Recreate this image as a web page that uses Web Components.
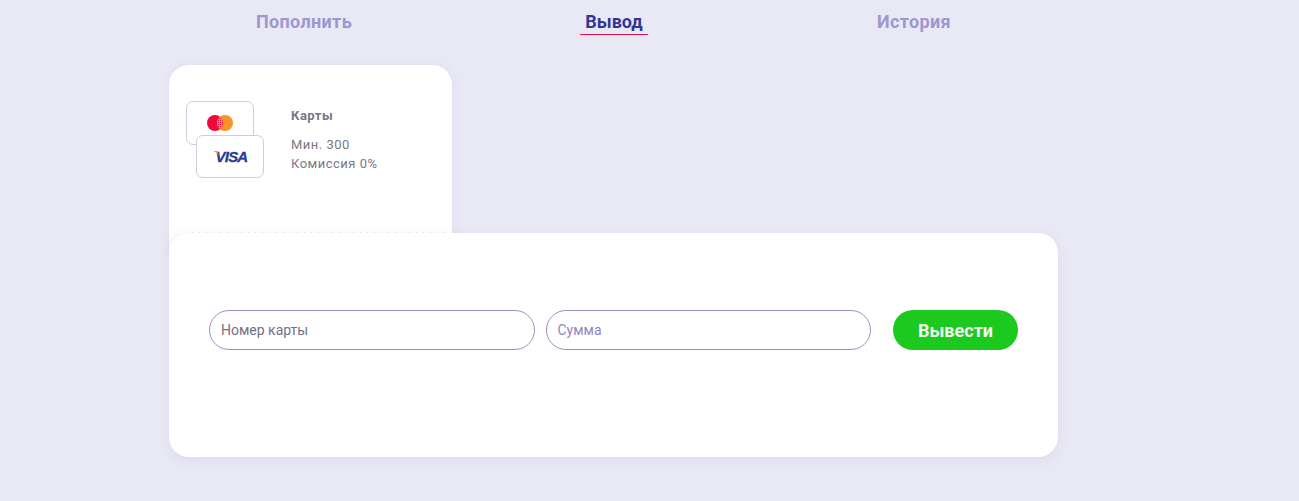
<!DOCTYPE html>
<html lang="ru">
<head>
<meta charset="UTF-8">
<title>Вывод</title>
<style>
    html, body { margin: 0; background: #e9e9f5; }
    body { font-family: Roboto, "Liberation Sans", sans-serif; height: 501px; overflow: hidden; }
</style>
</head>
<body>
<cash-page>
    <tab-bar>
        <tab-item>Пополнить</tab-item>
        <tab-item active style="--w:68px">Вывод</tab-item>
        <tab-item style="--w:90px">История</tab-item>
    </tab-bar>
    <method-card>
        <span slot="title">Карты</span>
        <span slot="min">Мин. 300</span>
        <span slot="fee">Комиссия 0%</span>
    </method-card>
    <withdraw-panel>
        <text-field placeholder="Номер карты" tone="#75707f"></text-field>
        <text-field placeholder="Сумма" tone="#8d87bd"></text-field>
        <green-button>Вывести</green-button>
    </withdraw-panel>
</cash-page>

<script>
    // small helper, every element just gets a shadow root with this html
    function shadowEl(name, html, setup) {
        customElements.define(name, class extends HTMLElement {
            constructor() {
                super();
                this.attachShadow({ mode: 'open' }).innerHTML = html;
            }
            connectedCallback() {
                if (setup) setup(this);
            }
        });
    }

    shadowEl('cash-page', `
        <style>
            :host { display: block; width: 889px; margin-left: 169px; }
        </style>
        <slot></slot>
    `);

    shadowEl('tab-bar', `
        <style>
            :host { display: flex; gap: 221px; height: 65px; padding-left: 80px; box-sizing: border-box; }
        </style>
        <slot></slot>
    `);

    shadowEl('tab-item', `
        <style>
            :host {
                display: block;
                width: var(--w, 110px);
                height: 35px;
                box-sizing: border-box;
                padding-top: 11px;
                text-align: center;
                font-size: 18px;
                letter-spacing: .35px;
                line-height: 21px;
                font-weight: 700;
                color: #9c97cf;
            }
            :host([active]) { color: #333595; letter-spacing: 0; }
            .line { display: none; height: 1px; margin-top: 2px; background: #ea1150; }
            :host([active]) .line { display: block; }
        </style>
        <slot></slot>
        <div class="line"></div>
    `);

    shadowEl('method-card', `
        <style>
            :host {
                display: flex;
                width: 283px;
                height: 188px;
                box-sizing: border-box;
                padding: 36px 0 0 17px;
                background: #fff;
                border-radius: 20px 20px 0 0;
                box-shadow: 0 0 10px rgba(120, 120, 190, .1);
                color: #7b7686;
                font-size: 13px;
                letter-spacing: .5px;
                line-height: 19px;
            }
            .logos { width: 78px; letter-spacing: 0; }
            .box {
                display: flex;
                align-items: center;
                justify-content: center;
                width: 68px;
                height: 44px;
                box-sizing: border-box;
                background: #fff;
                border: 1px solid #cfcedf;
                border-radius: 7px;
            }
            .box + .box { position: relative; height: 43px; margin: -10px 0 0 10px; }
            .visa {
                position: relative;
                padding-left: 3px;
                font: italic 700 15px/16px "Liberation Sans", sans-serif;
                letter-spacing: -.8px;
                -webkit-text-stroke: .3px #263a92;
                color: #263a92;
            }
            .visa svg { position: absolute; left: 0; top: 2px; }
            .info { margin-left: 27px; }
            .title { font-weight: 700; margin: 5px 0 10px; }
        </style>
        <div class="logos">
            <div class="box">
                <svg width="28" height="18" viewBox="0 0 28 18">
                    <defs>
                        <pattern id="stipple" width="2" height="2" patternUnits="userSpaceOnUse">
                            <rect width="2" height="2" fill="#f99227"/>
                            <rect width="1" height="1" fill="#eb0a3a"/>
                        </pattern>
                    </defs>
                    <circle cx="9" cy="9" r="8" fill="#eb0a3a"/>
                    <circle cx="19" cy="9" r="8" fill="#f99227"/>
                    <path d="M14 2.76A8 8 0 0 1 14 15.24A8 8 0 0 1 14 2.76z" fill="url(#stipple)"/>
                </svg>
            </div>
            <div class="box">
                <span class="visa">
                    <svg width="7" height="5" viewBox="0 0 7 5"><path d="M0 0h4.5l1.5 4.5C4.5 2.5 2.5 1 0 0z" fill="#f4a024"/></svg>
                    VISA
                </span>
            </div>
        </div>
        <div class="info">
            <div class="title"><slot name="title"></slot></div>
            <div><slot name="min"></slot></div>
            <div><slot name="fee"></slot></div>
        </div>
    `);

    shadowEl('withdraw-panel', `
        <style>
            :host {
                display: block;
                position: relative;
                height: 224px;
                margin-top: -20px;
                background: #fff;
                border-radius: 20px;
                box-shadow: 0 3px 12px rgba(120, 120, 190, .14);
            }
            .row {
                display: flex;
                gap: 11px;
                box-sizing: border-box;
                padding: 77px 40px 0;
            }
            .dots { position: absolute; left: 0; top: -1px; }
        </style>
        <svg class="dots" width="283" height="14" viewBox="0 0 283 14">
            <path d="M1.5 11Q5 4 12 1.5" fill="none" stroke="#dcdce8" stroke-dasharray="1 2.5"/>
            <path d="M23 .5H277" fill="none" stroke="#dcdce8" stroke-dasharray="1 6"/>
        </svg>
        <div class="row"><slot></slot></div>
    `);

    shadowEl('text-field', `
        <style>
            :host { display: block; flex: 1 1 0; min-width: 0; }
            input {
                display: block;
                width: 100%;
                height: 40px;
                box-sizing: border-box;
                padding: 0 11px;
                border: 1px solid #9a90cc;
                border-radius: 20px;
                outline: none;
                background: #fff;
                font: 14px Roboto, "Liberation Sans", sans-serif;
            }
            input::placeholder { color: var(--tone); opacity: 1; }
        </style>
        <input type="text">
    `, (el) => {
        const input = el.shadowRoot.querySelector('input');
        input.placeholder = el.getAttribute('placeholder') || '';
        el.style.setProperty('--tone', el.getAttribute('tone'));
    });

    shadowEl('green-button', `
        <style>
            :host { display: block; flex: none; margin-left: 11px; }
            button {
                display: block;
                width: 125px;
                height: 40px;
                border: 0;
                border-radius: 20px;
                background: #1cc91f;
                color: #f1f5ee;
                font: 700 18px Roboto, "Liberation Sans", sans-serif;
            }
        </style>
        <button><slot></slot></button>
    `);
</script>
</body>
</html>
